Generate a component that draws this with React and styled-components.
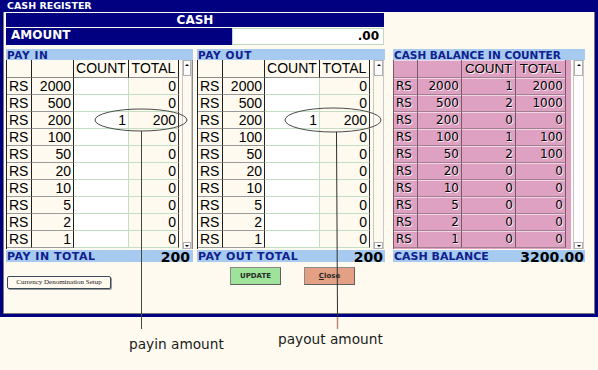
import React from "react";
import styled, { createGlobalStyle } from "styled-components";

const NAVY = "#000080";
const CREAM = "#fffaf0";
const SKY = "#a6caf0";
const PINK = "#dea1c1";

const GlobalStyle = createGlobalStyle`
  html, body {
    margin: 0;
    padding: 0;
    background: ${CREAM};
  }
  body {
    width: 598px;
    height: 370px;
    overflow: hidden;
    font-family: "DejaVu Sans", Verdana, sans-serif;
  }
`;

const denoms = [2000, 500, 200, 100, 50, 20, 10, 5, 2, 1];
const payIn = { 200: 1 };
const payOut = { 200: 1 };
const balance = [1, 2, 0, 1, 2, 0, 0, 0, 0, 0];

const Page = styled.div`
  position: relative;
  width: 598px;
  height: 370px;
  display: flex;
  flex-direction: column;
`;

const Window = styled.div`
  width: 598px;
  height: 317px;
  box-sizing: border-box;
  background: ${NAVY};
  padding: 0 3px 3px 3px;
  display: flex;
  flex-direction: column;
`;

const TitleBar = styled.div`
  height: 12px;
  line-height: 12px;
  padding-left: 4px;
  color: #fff;
  font: bold 9.5px "DejaVu Sans", Verdana, sans-serif;
`;

const Body = styled.div`
  flex: 1;
  background: ${CREAM};
  border-left: 1px solid #7a7a7a;
  border-right: 1px solid #7a7a7a;
  border-bottom: 1px solid #7a7a7a;
  padding: 1px 0 0 2px;
`;

const TopBlock = styled.div`
  width: 378px;
`;

const CashBar = styled.div`
  height: 14px;
  line-height: 14px;
  background: ${NAVY};
  color: #fff;
  text-align: center;
  font: bold 12px "DejaVu Sans", Verdana, sans-serif;
`;

const AmountRow = styled.div`
  display: flex;
  height: 17px;
  margin-top: 1px;
`;

const AmountLabel = styled.div`
  width: 226px;
  background: ${NAVY};
  color: #fff;
  padding-left: 5px;
  box-sizing: border-box;
  line-height: 17px;
  font: bold 12px "DejaVu Sans", Verdana, sans-serif;
`;

const AmountBox = styled.div`
  flex: 1;
  background: #fff;
  border: 1px solid #c0d8c0;
  box-sizing: border-box;
  text-align: right;
  padding-right: 4px;
  line-height: 15px;
  font: bold 12px "DejaVu Sans", Verdana, sans-serif;
`;

const Panels = styled.div`
  display: flex;
  margin-top: 4px;
`;

const Panel = styled.div`
  width: ${(p) => p.$w}px;
  margin-right: ${(p) => p.$gap || 0}px;
  display: flex;
  flex-direction: column;
`;

const LabelBar = styled.div`
  height: 11px;
  line-height: 12px;
  background: ${SKY};
  color: #10208e;
  padding-left: 1px;
  white-space: nowrap;
  letter-spacing: ${(p) => p.$spread || 0}px;
  font: bold 10.5px "DejaVu Sans", Verdana, sans-serif;
`;

const GridWrap = styled.div`
  display: flex;
  height: 189px;
  overflow: hidden;
  border-right: 1px solid ${(p) => (p.$edge ? "#8a8a8a" : "transparent")};
`;

const Table = styled.div`
  display: grid;
  grid-template-columns: ${(p) => p.$cols};
  grid-template-rows: 18px;
  grid-auto-rows: 17px;
  align-content: start;
  background: ${(p) => (p.$pink ? PINK : CREAM)};
  border-left: 1px solid ${(p) => (p.$pink ? "#7a5a6a" : "#202020")};
`;

const tones = {
  label: { bg: CREAM, right: "#202020", bottom: "#9a9a9a" },
  entry: { bg: "#ffffff", right: "#c4dec4", bottom: "#c4dec4" },
  total: { bg: CREAM, right: "#303030", bottom: "#c4dec4" },
  head: { bg: CREAM, right: "#202020", bottom: "#8a8a8a" },
  pink: { bg: PINK, right: "#7a5a6a", bottom: "#a07f8f" },
  pinkEnd: { bg: PINK, right: PINK, bottom: PINK },
};

const Cell = styled.div`
  box-sizing: border-box;
  padding: 0 2px;
  white-space: nowrap;
  overflow: hidden;
  text-align: ${(p) => p.$align || "right"};
  line-height: 16px;
  font-size: ${(p) => (p.$pink ? 12 : 14)}px;
  font-family: ${(p) =>
    p.$pink ? `"DejaVu Sans", Verdana, sans-serif` : `"Liberation Sans", Arial, sans-serif`};
  color: #000;
  text-shadow: ${(p) => (p.$pink ? "1px 1px 0 rgba(255,255,255,0.85)" : "none")};
  background: ${(p) => tones[p.$tone].bg};
  border-right: 1px solid ${(p) => tones[p.$tone].right};
  border-bottom: 1px solid ${(p) => tones[p.$tone].bottom};
  box-shadow: ${(p) => (p.$pink ? "inset 0 1px 0 #f3d6e6" : "none")};
`;

const HeadCell = styled(Cell)`
  text-align: center;
  padding: 0;
  line-height: 17px;
  font-family: "Liberation Sans", Arial, sans-serif;
  font-size: ${(p) => (p.$pink ? 13.5 : 14)}px;
  letter-spacing: ${(p) => (p.$pink ? -0.2 : 0)}px;
`;

const ScrollBar = styled.div`
  width: ${(p) => p.$w || 12}px;
  margin-left: ${(p) => p.$gap || 3}px;
  display: flex;
  flex-direction: column;
  background: ${(p) => (p.$pink ? "#fff" : CREAM)};
  border-left: 1px solid #c8c8c8;
  border-right: 1px solid #c8c8c8;
  box-sizing: border-box;
`;

const ArrowBtn = styled.div`
  height: ${(p) => p.$h}px;
  box-sizing: border-box;
  border: 1px solid #b0b0b0;
  background: #fdfdfd;
  display: flex;
  flex-direction: column;
  align-items: center;
  justify-content: ${(p) => (p.$down ? "flex-end" : "flex-start")};
  padding: 3px 0 1px;
  margin-top: ${(p) => (p.$down ? "auto" : 0)};

  &::before {
    content: "";
    width: 0;
    height: 0;
    border-left: 2px solid transparent;
    border-right: 2px solid transparent;
    ${(p) => (p.$down ? "border-top: 2px solid #000;" : "border-bottom: 2px solid #000;")}
  }
`;

const TotalBar = styled.div`
  height: 12px;
  margin-top: 1px;
  background: ${SKY};
  display: flex;
  justify-content: space-between;
  align-items: center;
  padding: 0 ${(p) => p.$pr || 0}px 0 1px;
  white-space: nowrap;
`;

const TotalLabel = styled.span`
  color: #10208e;
  letter-spacing: ${(p) => p.$spread || 0}px;
  font: bold 11px "DejaVu Sans", Verdana, sans-serif;
`;

const TotalValue = styled.span`
  color: #000;
  line-height: 12px;
  margin-top: 2px;
  font: bold 14px "DejaVu Sans", Verdana, sans-serif;
`;

const SetupButton = styled.button`
  margin: 14px 0 0 1px;
  width: 104px;
  height: 13px;
  padding: 0;
  background: ${CREAM};
  border: 1px solid #3a4a5a;
  border-radius: 2px;
  box-shadow: 1px 1px 0 #9a9a9a;
  color: #202020;
  font: 7px "Liberation Serif", "Times New Roman", serif;
  line-height: 11px;
`;

const ButtonRow = styled.div`
  display: flex;
  gap: 23px;
  margin-top: 5px;
  padding-left: 33px;
`;

const ActionButton = styled.button`
  width: 51px;
  height: 18px;
  padding: 0;
  background: ${(p) => p.$bg};
  border: 1px solid #8a8a8a;
  border-right-color: #606060;
  border-bottom-color: #606060;
  color: #2a2a2a;
  font: bold 7px "DejaVu Sans", Verdana, sans-serif;

  u {
    text-decoration: underline;
  }
`;

const Notes = styled.div`
  display: grid;
  grid-template-columns: 129px 149px 1fr;
  align-items: start;
`;

const Note = styled.div`
  grid-column: ${(p) => p.$col};
  margin-top: ${(p) => p.$top}px;
  line-height: 16px;
  color: #1a1a1a;
  font: 13.7px "DejaVu Sans", Verdana, sans-serif;
`;

const Overlay = styled.svg`
  position: absolute;
  left: 0;
  top: 0;
  pointer-events: none;
`;

function Scroll({ pink }) {
  return (
    <ScrollBar $pink={pink} $w={pink ? 11 : 12} $gap={pink ? 2 : 3}>
      <ArrowBtn $h={16} />
      <ArrowBtn $h={7} $down />
    </ScrollBar>
  );
}

function EntryGrid({ counts, edge }) {
  return (
    <GridWrap $edge={edge}>
      <Table $cols="25px 42px 55px 50px">
        <Cell $tone="head" />
        <Cell $tone="head" />
        <HeadCell $tone="head">COUNT</HeadCell>
        <HeadCell $tone="head">TOTAL</HeadCell>
        {denoms.map((d) => {
          const c = counts[d];
          return (
            <React.Fragment key={d}>
              <Cell $tone="label" $align="left">RS</Cell>
              <Cell $tone="label">{d}</Cell>
              <Cell $tone="entry">{c ? c : ""}</Cell>
              <Cell $tone="total">{c ? c * d : 0}</Cell>
            </React.Fragment>
          );
        })}
      </Table>
      <Scroll />
    </GridWrap>
  );
}

function BalanceGrid() {
  return (
    <GridWrap>
      <Table $cols="24px 44px 54px 50px 5px" $pink>
        <Cell $tone="pink" $pink />
        <Cell $tone="pink" $pink />
        <HeadCell $tone="pink" $pink>COUNT</HeadCell>
        <HeadCell $tone="pink" $pink>TOTAL</HeadCell>
        <Cell $tone="pinkEnd" />
        {denoms.map((d, i) => (
          <React.Fragment key={d}>
            <Cell $tone="pink" $pink $align="left">RS</Cell>
            <Cell $tone="pink" $pink>{d}</Cell>
            <Cell $tone="pink" $pink>{balance[i]}</Cell>
            <Cell $tone="pink" $pink>{balance[i] * d}</Cell>
            <Cell $tone="pinkEnd" />
          </React.Fragment>
        ))}
      </Table>
      <Scroll pink />
    </GridWrap>
  );
}

export default function App() {
  return (
    <>
      <GlobalStyle />
      <Page>
        <Window>
          <TitleBar>CASH REGISTER</TitleBar>
          <Body>
            <TopBlock>
              <CashBar>CASH</CashBar>
              <AmountRow>
                <AmountLabel>AMOUNT</AmountLabel>
                <AmountBox>.00</AmountBox>
              </AmountRow>
            </TopBlock>
            <Panels>
              <Panel $w={187} $gap={4}>
                <LabelBar $spread={0.6}>PAY IN</LabelBar>
                <EntryGrid counts={payIn} edge />
                <TotalBar $pr={3}>
                  <TotalLabel $spread={0.5}>PAY IN TOTAL</TotalLabel>
                  <TotalValue>200</TotalValue>
                </TotalBar>
                <div>
                  <SetupButton>Currency Denomination Setup</SetupButton>
                </div>
              </Panel>
              <Panel $w={188} $gap={8}>
                <LabelBar $spread={0.6}>PAY OUT</LabelBar>
                <EntryGrid counts={payOut} />
                <TotalBar $pr={2}>
                  <TotalLabel $spread={0.4}>PAY OUT TOTAL</TotalLabel>
                  <TotalValue>200</TotalValue>
                </TotalBar>
                <ButtonRow>
                  <ActionButton $bg="#9de49a">UPDATE</ActionButton>
                  <ActionButton $bg="#e3a085">
                    <u>C</u>lose
                  </ActionButton>
                </ButtonRow>
              </Panel>
              <Panel $w={192}>
                <LabelBar>CASH BALANCE IN COUNTER</LabelBar>
                <BalanceGrid />
                <TotalBar $pr={1}>
                  <TotalLabel>CASH BALANCE</TotalLabel>
                  <TotalValue>3200.00</TotalValue>
                </TotalBar>
              </Panel>
            </Panels>
          </Body>
        </Window>
        <Notes>
          <Note $col={2} $top={19}>payin amount</Note>
          <Note $col={3} $top={14}>payout amount</Note>
        </Notes>
        <Overlay width="598" height="370" viewBox="0 0 598 370">
          <ellipse cx="141" cy="120" rx="46" ry="11" fill="none" stroke="#4a4a4a" strokeWidth="1" />
          <ellipse cx="333" cy="120" rx="48" ry="12" fill="none" stroke="#4a4a4a" strokeWidth="1" />
          <line x1="141.5" y1="131" x2="141.5" y2="329" stroke="#3e4a3e" strokeWidth="1" />
          <line x1="336.5" y1="132" x2="337.5" y2="317" stroke="#2e2e2e" strokeWidth="1" />
          <line x1="337.5" y1="317" x2="337.5" y2="329" stroke="#b48a70" strokeWidth="1.5" />
        </Overlay>
      </Page>
    </>
  );
}
